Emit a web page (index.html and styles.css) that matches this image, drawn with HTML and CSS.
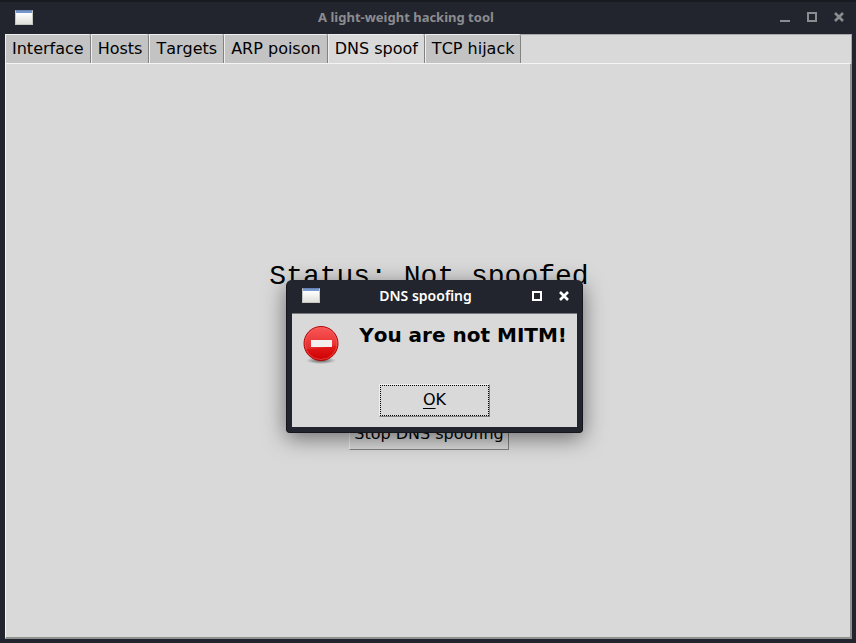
FILE: index.html
```html
<!DOCTYPE html>
<html lang="en">
<head>
<meta charset="utf-8">
<title>A light-weight hacking tool</title>
<link rel="stylesheet" href="styles.css">
</head>
<body>
<div class="window">
  <header class="titlebar">
    <span class="app-icon"></span>
    <h1 class="title">A light-weight hacking tool</h1>
    <div class="controls">
      <button type="button" class="control" aria-label="Minimize"><svg width="12" height="12" viewBox="0 0 12 12"><path d="M1 9h10v2H1z" fill="currentColor"/></svg></button>
      <button type="button" class="control" aria-label="Maximize"><svg width="12" height="12" viewBox="0 0 12 12"><path d="M2 2h8v8H2z" fill="none" stroke="currentColor" stroke-width="2"/></svg></button>
      <button type="button" class="control" aria-label="Close"><svg width="12" height="12" viewBox="0 0 12 12"><path d="M2 2l8 8M10 2l-8 8" stroke="currentColor" stroke-width="2.6"/></svg></button>
    </div>
  </header>
  <main class="notebook">
    <div class="tabs" role="tablist">
      <button type="button" class="tab" role="tab">Interface</button>
      <button type="button" class="tab" role="tab">Hosts</button>
      <button type="button" class="tab" role="tab">Targets</button>
      <button type="button" class="tab" role="tab">ARP poison</button>
      <button type="button" class="tab selected" role="tab" aria-selected="true">DNS spoof</button>
      <button type="button" class="tab" role="tab">TCP hijack</button>
    </div>
    <section class="pane" role="tabpanel">
      <p class="status">Status: Not spoofed</p>
      <button type="button" class="button">Stop DNS spoofing</button>
    </section>
  </main>
</div>

<div class="dialog" role="alertdialog" aria-labelledby="dialog-title" aria-describedby="dialog-text">
  <header class="titlebar active">
    <span class="app-icon"></span>
    <h2 class="title" id="dialog-title">DNS spoofing</h2>
    <div class="controls">
      <button type="button" class="control" aria-label="Maximize"><svg width="12" height="12" viewBox="0 0 12 12"><path d="M2 2h8v8H2z" fill="none" stroke="currentColor" stroke-width="2"/></svg></button>
      <button type="button" class="control" aria-label="Close"><svg width="12" height="12" viewBox="0 0 12 12"><path d="M2 2l8 8M10 2l-8 8" stroke="currentColor" stroke-width="2.6"/></svg></button>
    </div>
  </header>
  <div class="dialog-body">
    <div class="message">
      <svg class="error-icon" width="38" height="40" viewBox="0 0 38 40" aria-hidden="true">
        <defs>
          <linearGradient id="red" x1="0" y1="0" x2="0" y2="1"><stop offset="0" stop-color="#f84444"/><stop offset=".5" stop-color="#e82020"/><stop offset="1" stop-color="#cc0000"/></linearGradient>
          <radialGradient id="shade"><stop offset="0" stop-color="#000" stop-opacity=".6"/><stop offset="1" stop-color="#000" stop-opacity="0"/></radialGradient>
        </defs>
        <ellipse cx="19" cy="35.500" rx="15" ry="3.500" fill="url(#shade)"/>
        <circle cx="19" cy="18.500" r="17" fill="url(#red)" stroke="#ad0c0c"/>
        <circle cx="19" cy="18.500" r="16" fill="none" stroke="#ff6a6a" stroke-opacity=".5"/>
        <path d="M3 18.500a16 16 0 0 1 32 0v2C29 21 15 24 4 24c-1-2-1-4-1-5.500z" fill="#fff" fill-opacity=".1"/>
        <path d="M9 15h21v7H9z" fill="#f4f0f0"/>
      </svg>
      <p class="message-text" id="dialog-text">You are not MITM!</p>
    </div>
    <button type="button" class="button ok"><span class="ok-label"><u>O</u>K</span></button>
  </div>
</div>
</body>
</html>
```
FILE: styles.css
```css
* {
  box-sizing: border-box;
}

body {
  margin: 0;
  background: #23252e;
  font: 16px/20px "DejaVu Sans", sans-serif;
  font-kerning: none;
  color: #000;
}

h1, h2, p {
  margin: 0;
}

button {
  font: inherit;
  font-kerning: inherit;
  color: inherit;
}

.window {
  display: flex;
  flex-direction: column;
  min-height: 100vh;
  padding: 0 4px 4px 5px;
  border-top: 2px solid #191b21;
}

.titlebar {
  display: grid;
  grid-template-columns: auto 1fr auto;
  align-items: center;
  height: 32px;
  padding: 0 7px 2px 10px;
  color: #8b8c90;
}

.titlebar.active {
  height: 33px;
  color: #fff;
}

.app-icon {
  width: 18px;
  height: 15px;
  border: 1px solid #c5c6c2;
  border-top-color: #6583b5;
  background: linear-gradient(#7898cc 0 2px, #fff 2px, #dfe0da);
}

.title {
  font: bold 13px/20px "Noto Sans", sans-serif;
  text-align: center;
}

.active .title {
  font-size: 14px;
  font-weight: 600;
}

.controls {
  display: flex;
  justify-content: flex-end;
  gap: 15px;
}

.control {
  display: flex;
  padding: 0;
  border: 0;
  background: none;
}

.notebook {
  display: flex;
  flex: 1;
  flex-direction: column;
  background: #d9d9d9;
}

.tabs {
  display: flex;
  border-right: 1px solid #a6a7aa;
  box-shadow: inset 0 1px #a6a7aa;
}

.tab {
  height: 29px;
  padding: 0 6px;
  border: 1px solid #eee;
  border-right-color: #828282;
  border-bottom: 0;
  border-top-right-radius: 3px;
  background: #c3c3c3;
}

.tab.selected {
  height: 30px;
  margin-bottom: -1px;
  padding-bottom: 1px;
  background: #d9d9d9;
}

.pane {
  display: flex;
  flex: 1;
  flex-direction: column;
  align-items: center;
  justify-content: center;
  gap: 124px;
  padding: 10px 0 0 2px;
  border: solid;
  border-width: 1px 2px 2px 1px;
  border-color: #f4f4f4 #8f918f #8f918f #f4f4f4;
}

.status {
  font: 28px/32px "Liberation Mono", monospace;
}

.button {
  height: 33px;
  padding: 0 4px;
  border: 1px solid;
  border-color: #f0f0f0 #828282 #828282 #f0f0f0;
  background: #d9d9d9;
}

.dialog {
  position: absolute;
  top: 280px;
  left: 286px;
  width: 297px;
  padding: 0 5px 5px;
  border: 1px solid #15161b;
  border-top-width: 0;
  border-radius: 6px 6px 4px 4px;
  background: #23252e;
  box-shadow: 0 5px 22px rgba(0, 0, 0, 0.5);
}

.dialog-body {
  display: flex;
  flex-direction: column;
  align-items: center;
  gap: 19px;
  padding: 11px 10px 10px;
  border-top: 1px solid #777980;
  background: #d9d9d9;
}

.message {
  display: flex;
  align-items: flex-start;
  justify-content: space-between;
  width: 100%;
}

.message-text {
  font-size: 20px;
  font-weight: bold;
  line-height: 20px;
}

.ok {
  width: 111px;
  height: 33px;
  padding: 0;
}

.ok-label {
  display: grid;
  grid-auto-flow: column;
  place-content: center;
  height: 31px;
  padding-bottom: 2px;
  border: 1px dotted #000;
}

.ok-label u {
  text-underline-offset: 3px;
}
```
